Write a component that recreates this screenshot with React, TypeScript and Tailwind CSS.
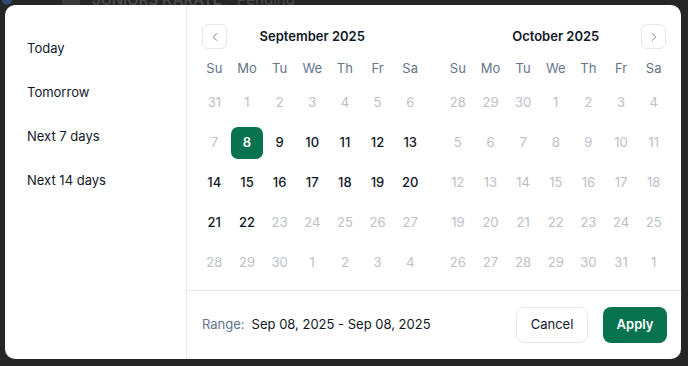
import React, { useState } from 'react';
import { ChevronLeft, ChevronRight } from 'lucide-react';

type Day = { n: number; muted: boolean };

const WEEK = ['Su', 'Mo', 'Tu', 'We', 'Th', 'Fr', 'Sa'];

// muted = outside month or not selectable
const build = (start: number[], days: number, tail: number, enabledFrom: number, enabledTo: number): Day[] => {
  const out: Day[] = start.map((n) => ({ n, muted: true }));
  for (let d = 1; d <= days; d++) out.push({ n: d, muted: d < enabledFrom || d > enabledTo });
  for (let d = 1; d <= tail; d++) out.push({ n: d, muted: true });
  return out;
};

const september = build([31], 30, 4, 8, 22);
const october = build([28, 29, 30], 31, 1, 99, 0);

const presets = ['Today', 'Tomorrow', 'Next 7 days', 'Next 14 days'];

const Month = ({
  title,
  days,
  selected,
  side,
}: {
  title: string;
  days: Day[];
  selected?: number;
  side: 'left' | 'right';
}) => (
  <div className="flex-1">
    <div className="grid grid-cols-[25px_1fr_25px] items-center px-1 h-[25px]">
      {side === 'left' ? (
        <button className="w-[25px] h-[25px] rounded-md border border-[#e4e7ee] flex items-center justify-center text-[#6b7280]">
          <ChevronLeft className="w-3.5 h-3.5" strokeWidth={1.5} />
        </button>
      ) : (
        <span />
      )}
      <div className="text-center text-[13px] font-semibold text-[#111827]">{title}</div>
      {side === 'right' ? (
        <button className="w-[25px] h-[25px] rounded-md border border-[#e4e7ee] flex items-center justify-center text-[#6b7280]">
          <ChevronRight className="w-3.5 h-3.5" strokeWidth={1.5} />
        </button>
      ) : (
        <span />
      )}
    </div>
    <div className="grid grid-cols-7 mt-[6px]">
      {WEEK.map((w) => (
        <div key={w} className="h-7 flex items-center justify-center text-[13px] text-[#64748b]">
          {w}
        </div>
      ))}
      {days.map((d, i) => (
        <div key={i} className="h-10 flex items-center justify-center">
          {!d.muted && d.n === selected ? (
            <span className="w-full h-8 rounded-[7px] bg-[#08734f] text-white font-semibold text-[13px] flex items-center justify-center">
              {d.n}
            </span>
          ) : (
            <span className={`text-[13px] ${d.muted ? 'text-[#bcc0c8]' : 'text-[#111827] font-medium'}`}>{d.n}</span>
          )}
        </div>
      ))}
    </div>
  </div>
);

export default function App() {
  const [active, setActive] = useState<string | null>(null);

  return (
    <div
      className="relative w-[688px] h-[366px] overflow-hidden bg-[#262626]"
      style={{ fontFamily: 'Inter, "Noto Sans", sans-serif' }}
    >
      {/* page behind the overlay */}
      <div className="flex items-center gap-3 -mt-[9px] h-[18px] px-[2px]">
        <span className="w-[10px] h-[10px] rounded-full bg-[#2f4a73]" />
        <span className="w-[18px] h-[14px] ml-[38px] bg-[#3a3a3a]" />
        <span className="text-[15px] font-semibold text-[#4a4a4a]">
          JUNIORS KARATE <span className="font-normal">- Pending</span>
        </span>
      </div>

      <div className="absolute left-[5px] top-[5px] w-[676px] h-[354px] bg-white rounded-[10px] flex overflow-hidden">
        <aside className="w-[182px] border-r border-[#e5e7eb] pt-[22px]">
          {presets.map((p) => (
            <button
              key={p}
              onClick={() => setActive(p)}
              className={`w-full h-11 px-[22px] flex items-center text-[13px] text-[#111827] ${active === p ? 'bg-gray-50' : ''}`}
            >
              {p}
            </button>
          ))}
        </aside>

        <div className="flex-1 flex flex-col">
          <div className="flex gap-[15px] px-[11px] pt-[19px] pb-[7px] border-b border-[#e5e7eb]">
            <Month title="September 2025" days={september} selected={8} side="left" />
            <Month title="October 2025" days={october} side="right" />
          </div>
          <div className="flex-1 flex items-center justify-between pl-[15px] pr-[14px]">
            <div className="text-[13px] flex gap-[7px]">
              <span className="text-[#64748b]">Range:</span>
              <span className="text-[#111827]">Sep 08, 2025 - Sep 08, 2025</span>
            </div>
            <div className="flex gap-[15px]">
              <button className="h-9 w-[72px] rounded-lg border border-[#e4e7ee] text-[13px] text-[#111827]">
                Cancel
              </button>
              <button className="h-9 w-16 rounded-lg bg-[#08734f] text-[13px] font-semibold text-white">Apply</button>
            </div>
          </div>
        </div>
      </div>
    </div>
  );
}
